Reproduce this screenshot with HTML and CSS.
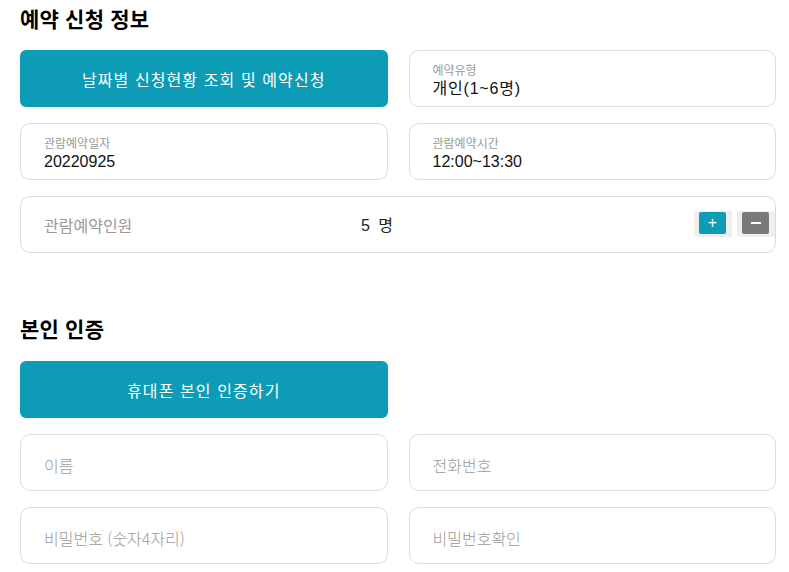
FILE: index.html
```html
<!DOCTYPE html>
<html lang="ko">
<head>
<meta charset="utf-8">
<title>예약 신청 정보</title>
<link rel="stylesheet" href="styles.css">
</head>
<body>
<main class="page">
  <section class="section">
    <h2 class="title">예약 신청 정보</h2>
    <div class="grid">
      <button class="btn" type="button">날짜별 신청현황 조회 및 예약신청</button>
      <div class="field">
        <span class="label">예약유형</span>
        <span class="value value-ko">개인(1~6명)</span>
      </div>
      <div class="field">
        <span class="label">관람예약일자</span>
        <span class="value">20220925</span>
      </div>
      <div class="field">
        <span class="label">관람예약시간</span>
        <span class="value">12:00~13:30</span>
      </div>
      <div class="field field-wide count-row">
        <span class="count-label">관람예약인원</span>
        <span class="count-value">5 명</span>
        <span class="steppers">
          <span class="step"><span class="step-inner step-plus">+</span></span>
          <span class="step"><span class="step-inner step-minus"><span class="bar"></span></span></span>
        </span>
      </div>
    </div>
  </section>
  <section class="section section-auth">
    <h2 class="title">본인 인증</h2>
    <div class="grid">
      <button class="btn" type="button">휴대폰 본인 인증하기</button>
      <div class="empty"></div>
      <div class="field input"><span class="ph">이름</span></div>
      <div class="field input"><span class="ph">전화번호</span></div>
      <div class="field input"><span class="ph">비밀번호 (숫자4자리)</span></div>
      <div class="field input"><span class="ph">비밀번호확인</span></div>
    </div>
  </section>
</main>
</body>
</html>
```
FILE: styles.css
```css
* { box-sizing: border-box; }
html, body { margin: 0; padding: 0; background: #fff; }
body {
  font-family: "Liberation Sans", "Noto Sans CJK KR", sans-serif;
  color: #111;
}
.page {
  width: 756px;
  margin-left: 20px;
  padding-top: 4px;
}
.title {
  margin: 0 0 18px 0;
  font-size: 21px;
  line-height: 28px;
  font-weight: 700;
  color: #000;
  font-family: "Noto Sans CJK KR", sans-serif;
  letter-spacing: 0.2px;
}
.section-auth { margin-top: 61px; }
.section-auth .title { margin-bottom: 19px; }
.grid {
  display: grid;
  grid-template-columns: 1fr 1fr;
  column-gap: 21px;
  row-gap: 16px;
}
.btn {
  height: 57px;
  border: 0;
  border-radius: 6px;
  background: #0e9bb6;
  color: #fff;
  font-family: "Liberation Sans", "Noto Sans CJK KR", sans-serif;
  font-size: 16px;
  letter-spacing: 1.1px;
  padding: 0;
}
.field {
  height: 57px;
  border: 1px solid #dcdcdc;
  border-radius: 10px;
  padding: 12px 23px;
  display: flex;
  flex-direction: column;
}
.label {
  font-size: 12px;
  line-height: 16px;
  color: #999;
}
.value {
  font-size: 16px;
  line-height: 20px;
  color: #111;
}
.value-ko { letter-spacing: 0.8px; }
.field-wide {
  grid-column: 1 / -1;
}
.count-row {
  flex-direction: row;
  align-items: center;
  padding: 0 0 0 23px;
}
.count-label {
  width: 317px;
  font-size: 16px;
  color: #999;
}
.count-value {
  flex: 1;
  font-size: 16px;
  color: #222;
  word-spacing: 4px;
  margin-top: -2px;
}
.steppers {
  display: flex;
  gap: 5px;
  margin-top: -2px;
}
.step {
  width: 38px;
  height: 26px;
  background: #efefef;
  padding: 1px 0 0 5px;
  display: block;
}
.step-inner {
  width: 27px;
  height: 22px;
  border-radius: 2px;
  display: flex;
  align-items: center;
  justify-content: center;
  color: #fff;
  font-size: 16px;
  line-height: 1;
}
.step-plus { background: #0e9bb6; }
.step-minus { background: #7a7a7a; }
.bar {
  width: 10px;
  height: 2px;
  background: #fff;
}
.input {
  justify-content: center;
  padding: 0 23px;
}
.ph {
  font-family: "Noto Sans CJK KR", sans-serif;
  font-weight: 300;
  font-size: 16px;
  color: #9a9a9a;
  margin-top: 4px;
}
```
